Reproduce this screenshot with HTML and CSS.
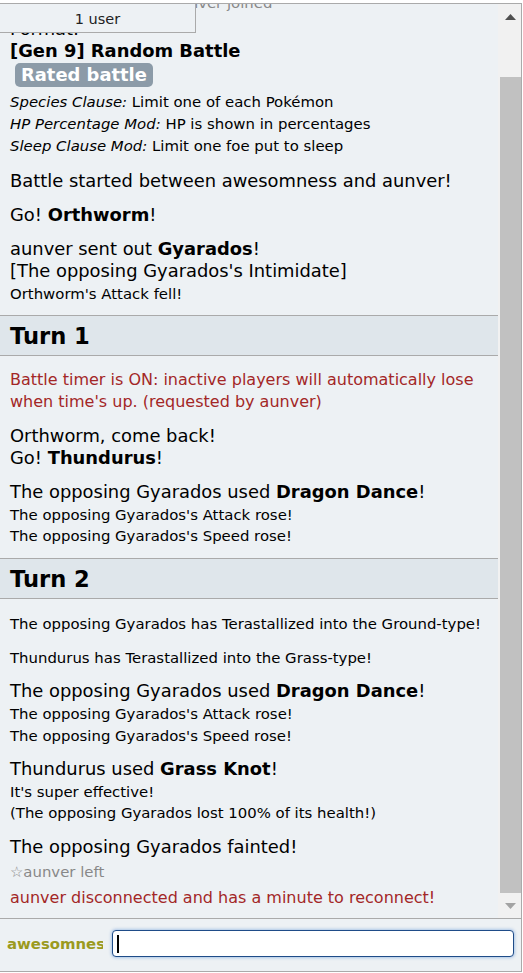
FILE: index.html
```html
<!DOCTYPE html>
<html>
<head>
    <meta charset="UTF-8">
    <meta name="viewport" content="width=device-width, initial-scale=1.0">
    <title>Battle Log</title>
    <link rel="stylesheet" href="styles.css">
</head>
<body>
    <div class="room">
        <div class="log-area">
            <button class="userlist">1 user</button>

            <div class="log">
                <div class="log-inner">
                    <div class="chat">☆awesomness and ☆aunver joined</div>

                    <div class="msg intro">
                        Format:<br>
                        <strong>[Gen 9] Random Battle</strong><br>
                        <span class="rated">Rated battle</span><br>
                        <small><em>Species Clause:</em> Limit one of each Pokémon</small><br>
                        <small><em>HP Percentage Mod:</em> HP is shown in percentages</small><br>
                        <small><em>Sleep Clause Mod:</em> Limit one foe put to sleep</small>
                    </div>

                    <div class="msg">Battle started between awesomness and aunver!</div>
                    <div class="msg">Go! <strong>Orthworm</strong>!</div>
                    <div class="msg">
                        aunver sent out <strong>Gyarados</strong>!<br>
                        [The opposing Gyarados's Intimidate]<br>
                        <small>Orthworm's Attack fell!</small>
                    </div>

                    <h2 class="turn">Turn 1</h2>

                    <div class="msg error">Battle timer is ON: inactive players will automatically lose when time's up. (requested by aunver)</div>
                    <div class="msg">
                        Orthworm, come back!<br>
                        Go! <strong>Thundurus</strong>!
                    </div>
                    <div class="msg">
                        The opposing Gyarados used <strong>Dragon Dance</strong>!<br>
                        <small>The opposing Gyarados's Attack rose!</small><br>
                        <small>The opposing Gyarados's Speed rose!</small>
                    </div>

                    <h2 class="turn">Turn 2</h2>

                    <div class="msg"><small>The opposing Gyarados has Terastallized into the Ground-type!</small></div>
                    <div class="msg"><small>Thundurus has Terastallized into the Grass-type!</small></div>
                    <div class="msg">
                        The opposing Gyarados used <strong>Dragon Dance</strong>!<br>
                        <small>The opposing Gyarados's Attack rose!</small><br>
                        <small>The opposing Gyarados's Speed rose!</small>
                    </div>
                    <div class="msg">
                        Thundurus used <strong>Grass Knot</strong>!<br>
                        <small>It's super effective!</small><br>
                        <small>(The opposing Gyarados lost 100% of its health!)</small>
                    </div>
                    <div class="msg">The opposing Gyarados fainted!</div>
                    <div class="chat">☆aunver left</div>
                    <div class="msg error">aunver disconnected and has a minute to reconnect!</div>
                </div>
            </div>

            <div class="scrollbar">
                <div class="sb-button">
                    <svg width="11" height="6" viewBox="0 0 11 6"><polygon points="0,6 5.5,0 11,6" fill="#505050"></polygon></svg>
                </div>
                <div class="sb-track">
                    <div class="sb-thumb"></div>
                </div>
                <div class="sb-button">
                    <svg width="11" height="6" viewBox="0 0 11 6"><polygon points="0,0 11,0 5.5,6" fill="#a3a3a3"></polygon></svg>
                </div>
            </div>
        </div>

        <div class="chatbox">
            <div class="chat-name">awesomness</div>
            <div class="textbox"><span class="caret"></span></div>
        </div>
    </div>
</body>
</html>
```

FILE: styles.css
```css
body {
    margin: 0;
    background-color: white;
    font-family: "DejaVu Sans", Verdana, sans-serif;
    color: #000;
}

.room {
    box-sizing: border-box;
    height: 969px;
    margin: 3px 1px 0 -1px;
    border: 1px solid #aaa;
    background-color: #edf1f4;
    display: flex;
    flex-direction: column;
}

.log-area {
    position: relative;
    box-sizing: border-box;
    height: 915px;
    border-bottom: 1px solid #aaa;
    display: flex;
}

/* user list toggle sits over the top of the log */
.userlist {
    position: absolute;
    top: 0;
    left: -1px;
    z-index: 1;
    box-sizing: border-box;
    width: 197px;
    height: 29px;
    margin: 0;
    padding: 1px 0 0;
    border: 1px solid #aaa;
    border-top: none;
    background-color: #edf1f4;
    color: #222;
    font-family: inherit;
    font-size: 14.5px;
}

.log {
    flex: 1;
    overflow: hidden;
    display: flex;
    flex-direction: column;
    justify-content: flex-end;
}

.log-inner {
    flex-shrink: 0;
    padding-bottom: 9px;
}

.msg {
    margin-top: 12.5px;
    padding: 0 6px 0 10px;
    font-size: 17.9px;
    line-height: 21.75px;
}

.msg small {
    font-size: 14.9px;
    line-height: 1;
}

.msg.intro {
    margin-bottom: 14px;
}

.msg.error {
    font-size: 16px;
    color: #a32727;
}

.chat {
    padding: 0 10px;
    font-size: 14.9px;
    line-height: 18px;
    color: #888;
}

.chat + .msg,
.msg + .chat {
    margin-top: 6px;
}

.rated {
    display: inline-block;
    margin: 2px 0 3px 5px;
    padding: 0 6px;
    line-height: 24px;
    border-radius: 5px;
    background-color: #8c9ba8;
    color: white;
    font-weight: bold;
}

.turn {
    margin: 12px 0 0;
    padding: 1px 10px 0;
    border-top: 1px solid #aaa;
    border-bottom: 1px solid #aaa;
    background-color: #dfe6eb;
    font-size: 22.6px;
    line-height: 38px;
}

.scrollbar {
    flex: none;
    width: 23px;
    display: flex;
    flex-direction: column;
    background-color: #f1f1f1;
}

.sb-button {
    height: 25px;
    padding-left: 2px;
    display: flex;
    align-items: center;
    justify-content: center;
}

.sb-button svg {
    display: block;
}

.sb-track {
    flex: 1;
    display: flex;
    flex-direction: column;
}

.sb-thumb {
    flex: 1;
    margin: 48px 0 0 2px;
    background-color: #c1c1c1;
}

.chatbox {
    flex: 1;
    display: flex;
    align-items: center;
    padding: 0 7px 3px 7px;
}

.chat-name {
    flex: none;
    width: 96px;
    margin-right: 9px;
    overflow: hidden;
    white-space: nowrap;
    font-size: 14.9px;
    font-weight: bold;
    color: #9b9a1e;
}

.textbox {
    flex: 1;
    box-sizing: border-box;
    height: 27px;
    padding-left: 4px;
    border: 1px solid #1f4c88;
    border-radius: 4px;
    background-color: white;
    box-shadow: 0 0 3px 1px rgba(90, 145, 215, 0.45);
    display: flex;
    align-items: center;
}

.caret {
    width: 2px;
    height: 18px;
    background-color: #000;
}
```
